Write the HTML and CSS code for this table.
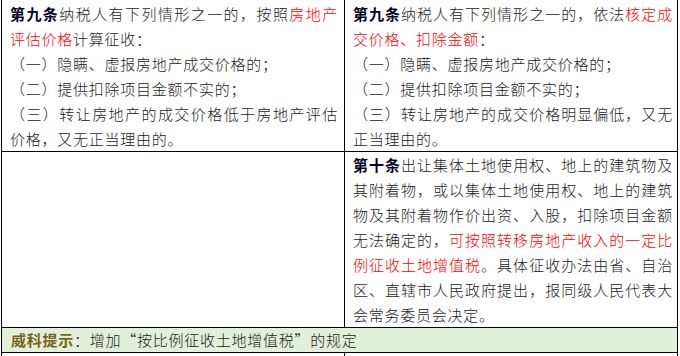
FILE: index.html
```html
<!DOCTYPE html>
<html lang="zh-CN">
<head>
<meta charset="utf-8">
<title>土地增值税对比</title>
<link rel="stylesheet" href="styles.css">
</head>
<body>
<table class="cmp">
  <colgroup><col class="c-left"><col class="c-right"></colgroup>
  <tr class="r1">
    <td>
      <p><b>第九条</b>纳税人有下列情形之一的，按照<span class="red">房地产评估价格</span>计算征收：</p>
      <p>（一）隐瞒、虚报房地产成交价格的；</p>
      <p>（二）提供扣除项目金额不实的；</p>
      <p>（三）转让房地产的成交价格低于房地产评估价格，又无正当理由的。</p>
    </td>
    <td class="rc">
      <p><b>第九条</b>纳税人有下列情形之一的，依法<span class="red">核定成交价格、扣除金额</span>：</p>
      <p>（一）隐瞒、虚报房地产成交价格的；</p>
      <p>（二）提供扣除项目金额不实的；</p>
      <p>（三）转让房地产的成交价格明显偏低，又无正当理由的。</p>
    </td>
  </tr>
  <tr class="r2">
    <td></td>
    <td class="rc">
      <p><b>第十条</b>出让集体土地使用权、地上的建筑物及其附着物，或以集体土地使用权、地上的建筑物及其附着物作价出资、入股，扣除项目金额无法确定的，<span class="red">可按照转移房地产收入的一定比例征收土地增值税</span>。具体征收办法由省、自治区、直辖市人民政府提出，报同级人民代表大会常务委员会决定。</p>
    </td>
  </tr>
  <tr class="tip">
    <td colspan="2"><span class="tip-label">威科提示</span>：增加“按比例征收土地增值税”的规定</td>
  </tr>
  <tr class="r4">
    <td></td>
    <td></td>
  </tr>
</table>
</body>
</html>
```

FILE: styles.css
```css
html, body {
  margin: 0;
  padding: 0;
  background: #ffffff;
}

.cmp {
  border-collapse: collapse;
  margin: -1px 0 0 1px;
  table-layout: fixed;
  width: 677px;
  font-family: "Noto Sans CJK SC", "Noto Sans", sans-serif;
  font-size: 15px;
  font-weight: 300;
  line-height: 25px;
  letter-spacing: 0.75px;
  color: #1a1a1a;
}

.c-left { width: 343px; }
.c-right { width: 333px; }

.cmp td {
  border: 1px solid #000;
  padding: 0 6px 0 8px;
  vertical-align: top;
  text-align: justify;
}

.cmp td.rc {
  padding-right: 4px;
}

.cmp p {
  margin: 0;
}

.r1 td { height: 152px; padding-top: 1px; box-sizing: border-box; }
.r2 td { height: 175px; }

.cmp b {
  font-weight: 700;
  color: #000022;
}

.red { color: #ff0000; }

.tip td {
  background: #e2efd9;
  height: 24px;
  line-height: 24px;
  padding-left: 9px;
}

.tip-label {
  color: #76631a;
  font-weight: 700;
}

.r4 td { height: 20px; }
```
